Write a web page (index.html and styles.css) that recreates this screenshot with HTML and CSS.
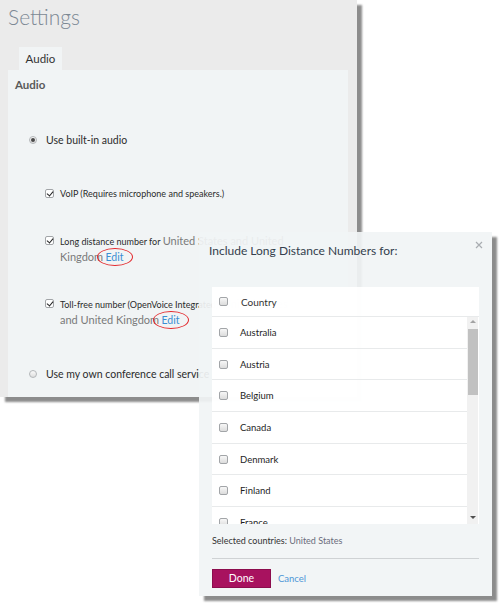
FILE: index.html
```html
<!DOCTYPE html>
<html lang="en">
<head>
  <meta charset="UTF-8" />
  <meta name="viewport" content="width=device-width, initial-scale=1.0"/>
  <title>Settings</title>
  <link rel="stylesheet" href="styles.css">
</head>

<body>
  <div class="settings">
    <h1 class="settings-title">Settings</h1>

    <div class="tabs">
      <div class="tab">Audio</div>
    </div>

    <div class="panel">
      <h2 class="panel-heading">Audio</h2>

      <label class="option first">
        <span class="radio checked"></span>
        <span>Use built-in audio</span>
      </label>

      <label class="sub voip">
        <span class="box checked"></span>
        <span>VoIP (Requires microphone and speakers.)</span>
      </label>

      <label class="sub long">
        <span class="box checked"></span>
        <span class="sub-text">Long distance number for <span class="muted">United States and United Kingdom</span> <a class="edit marked" href="#">Edit</a></span>
      </label>

      <label class="sub toll">
        <span class="box checked"></span>
        <span class="sub-text">Toll-free number (OpenVoice Integrated): <span class="muted">United States and United Kingdom</span> <a class="edit marked" href="#">Edit</a></span>
      </label>

      <label class="option own">
        <span class="radio"></span>
        <span>Use my own conference call service</span>
      </label>
    </div>
  </div>

  <div class="dialog">
    <h3 class="dialog-title">Include Long Distance Numbers for:</h3>
    <svg class="close" width="8" height="8" viewBox="0 0 8 8">
      <path d="M1 1L7 7M7 1L1 7" stroke="#a9adb1" stroke-width="1.2" fill="none"/>
    </svg>

    <div class="countries">
      <div class="row head">
        <span class="box"></span>
        <span>Country</span>
      </div>
      <div class="list">
        <div class="rows">
          <div class="row"><span class="box"></span><span>Australia</span></div>
          <div class="row"><span class="box"></span><span>Austria</span></div>
          <div class="row"><span class="box"></span><span>Belgium</span></div>
          <div class="row"><span class="box"></span><span>Canada</span></div>
          <div class="row"><span class="box"></span><span>Denmark</span></div>
          <div class="row"><span class="box"></span><span>Finland</span></div>
          <div class="row"><span class="box"></span><span>France</span></div>
        </div>
        <div class="scrollbar">
          <span class="arrow up"></span>
          <span class="thumb"></span>
          <span class="track"></span>
          <span class="arrow down"></span>
        </div>
      </div>
    </div>

    <p class="selected">Selected countries: <span class="muted">United States</span></p>
    <hr class="divider">

    <div class="actions">
      <button class="done">Done</button>
      <a class="cancel" href="#">Cancel</a>
    </div>
  </div>
</body>
</html>
```

FILE: styles.css
```css
:root {
  --frame: #ebebeb;
  --pane: #f1f4f5;
  --text: #333;
  --muted: #7a7a7a;
  --link: #3b8fd3;
  --shadow: 5px 5px 2px rgba(0, 0, 0, .45);
}

* { box-sizing: border-box; }

body {
  margin: 0;
  width: 500px;
  height: 608px;
  position: relative;
  background: #fff;
  font-family: Lato, "Liberation Sans", sans-serif;
  color: var(--text);
  overflow: hidden;
}

/* settings window */
.settings {
  width: 357px;
  height: 397px;
  background: var(--frame);
  box-shadow: var(--shadow);
  display: flex;
  flex-direction: column;
}

.settings-title {
  margin: 0 0 17px;
  padding: 4px 0 0 8px;
  font-size: 21px;
  font-weight: 300;
  line-height: 26px;
  color: #7c8894;
}

.tabs {
  display: flex;
  padding-left: 19px;
}

.tab {
  width: 43px;
  height: 23px;
  line-height: 23px;
  text-align: center;
  font-size: 11.5px;
  background: var(--pane);
}

.panel {
  flex: 1;
  margin: 0 9px 0 8px;
  padding: 7px 0 0 7px;
  background: var(--pane);
  overflow: hidden;
}

.panel-heading {
  margin: 0;
  font-size: 11.5px;
  font-weight: 700;
  line-height: 16px;
  color: #5a5a5a;
}

.option {
  display: flex;
  align-items: center;
  gap: 9px;
  margin-left: 14px;
  font-size: 10.5px;
  line-height: 16px;
  white-space: nowrap;
  color: #2b2b2b;
}

.option.first { margin-top: 39px; }
.option.own { margin-top: 38px; }

.sub {
  display: flex;
  align-items: flex-start;
  gap: 6px;
  margin-left: 30px;
  font-size: 9px;
  line-height: 15px;
  color: #2b2b2b;
}

.sub .box { margin-top: 3px; }
.sub.voip { margin-top: 38px; }
.sub.long { margin-top: 32px; }
.sub.toll { margin-top: 31px; }

.sub-text { width: 240px; flex: none; }

.muted {
  color: var(--muted);
  font-size: 11px;
}

.edit {
  color: var(--link);
  text-decoration: none;
  font-size: 10.5px;
}

.marked { position: relative; }

.marked::after {
  content: "";
  position: absolute;
  left: -8px;
  right: -10px;
  top: -3px;
  bottom: -3px;
  border: 1.5px solid #e3262a;
  border-radius: 50%;
}

/* form controls */
.radio {
  width: 8px;
  height: 8px;
  flex: none;
  border-radius: 50%;
  border: 1px solid #b3b6b9;
  background: linear-gradient(#fafafa, #dedede);
  position: relative;
}

.radio.checked::after {
  content: "";
  position: absolute;
  inset: 1px;
  border-radius: 50%;
  background: #4a4a4a;
}

.box {
  width: 9px;
  height: 9px;
  flex: none;
  border: 1px solid #a2a5a8;
  border-radius: 2px;
  background: linear-gradient(#f7f7f7, #dcdcdc);
  position: relative;
}

.box.checked { background: #fff; }

.box.checked::after {
  content: "";
  position: absolute;
  left: 2px;
  top: 0;
  width: 3px;
  height: 5px;
  border-right: 1.5px solid #222;
  border-bottom: 1.5px solid #222;
  transform: rotate(40deg);
}

/* country dialog */
.dialog {
  position: absolute;
  left: 199px;
  top: 232px;
  width: 293px;
  height: 364px;
  padding: 0 13px;
  background: rgba(241, 244, 245, .93);
  box-shadow: var(--shadow);
}

.dialog-title {
  margin: 10px 0 0 -3px;
  font-size: 12px;
  font-weight: 400;
  line-height: 18px;
  color: #34404d;
}

.close {
  position: absolute;
  top: 9px;
  right: 9px;
}

.countries {
  margin-top: 27px;
  background: rgba(255, 255, 255, .94);
  font-size: 9.5px;
}

.row {
  display: flex;
  align-items: center;
  gap: 12px;
  height: 31.7px;
  padding-left: 7px;
  border-bottom: 1px solid #e8eaeb;
  color: #1e1e1e;
}

.row.head {
  height: 30px;
  gap: 13px;
  font-size: 10px;
  color: #333;
}

.list {
  display: flex;
  height: 207px;
  overflow: hidden;
}

.rows { flex: 1; }

.scrollbar {
  width: 11px;
  margin-right: 1px;
  display: flex;
  flex-direction: column;
  align-items: center;
  background: #f1f1f1;
}

.arrow {
  width: 0;
  height: 0;
  border-left: 3px solid transparent;
  border-right: 3px solid transparent;
}

.arrow.up {
  margin: 3px 0 6px;
  border-bottom: 3px solid #a3a3a3;
}

.arrow.down {
  margin: 4px 0 5px;
  border-top: 3px solid #505050;
}

.thumb {
  width: 10px;
  height: 66px;
  background: #c1c1c1;
}

.track { flex: 1; }

.selected {
  margin: 9px 0 0;
  font-size: 9px;
  line-height: 16px;
}

.selected .muted {
  color: #6b6d7c;
  font-size: 9px;
}

.divider {
  margin: 9px 0 0;
  border: 0;
  border-top: 1px solid #cfd2d4;
}

.actions {
  display: flex;
  align-items: center;
  gap: 7px;
  margin-top: 10px;
}

.done {
  width: 59px;
  height: 19px;
  padding: 0;
  border: 1px solid #8c0d4e;
  background: #a8125f;
  color: #fff;
  font-family: inherit;
  font-size: 10.5px;
  line-height: 17px;
}

.cancel {
  color: #4f97d6;
  font-size: 9.5px;
  text-decoration: none;
}
```
